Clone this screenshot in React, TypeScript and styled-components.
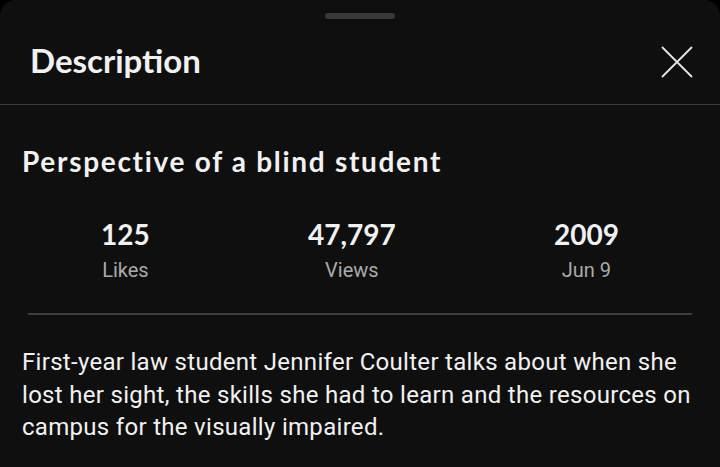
import styled, { createGlobalStyle } from "styled-components";

const GlobalStyle = createGlobalStyle`
  html, body {
    margin: 0;
    padding: 0;
    background: #000;
  }
  body {
    font-family: Roboto, "Liberation Sans", sans-serif;
  }
`;

const Sheet = styled.div`
  width: 720px;
  height: 467px;
  background: #0f0f0f;
  border-radius: 16px 16px 0 0;
  overflow: hidden;
  display: flex;
  flex-direction: column;
`;

const Handle = styled.div`
  width: 70px;
  height: 6px;
  border-radius: 3px;
  background: #393939;
  margin: 13px auto 0;
`;

const Header = styled.div`
  height: 85px;
  display: flex;
  align-items: center;
  justify-content: space-between;
  padding: 0 26px 0 30px;
  border-bottom: 1.5px solid #3a3a3a;
`;

const HeaderTitle = styled.h1`
  margin: 0 0 4px;
  font-family: Lato, "Noto Sans", sans-serif;
  font-weight: 700;
  font-size: 33px;
  color: #f1f1f1;
`;

const CloseButton = styled.button`
  background: none;
  border: none;
  padding: 0;
  width: 34px;
  height: 34px;
  display: flex;
  align-items: center;
  justify-content: center;
  cursor: pointer;
`;

const Body = styled.div`
  padding: 0 22px;
`;

const VideoTitle = styled.h2`
  margin: 40px 0 0;
  font-family: Lato, "Noto Sans", sans-serif;
  font-weight: 700;
  font-size: 28px;
  letter-spacing: 1.7px;
  line-height: 32px;
  color: #f1f1f1;
`;

const Stats = styled.div`
  display: flex;
  justify-content: space-around;
  margin-top: 41px;
`;

const Stat = styled.div`
  display: flex;
  flex-direction: column;
  align-items: center;
`;

const StatValue = styled.div`
  font-family: Lato, "Noto Sans", sans-serif;
  font-weight: 700;
  font-size: 28px;
  line-height: 32px;
  color: #f1f1f1;
`;

const StatLabel = styled.div`
  font-size: 20px;
  line-height: 26px;
  margin-top: 7px;
  color: #aaaaaa;
`;

const Divider = styled.hr`
  margin: 30px 6px 0;
  border: none;
  height: 2px;
  background: #3d3d3d;
`;

const Text = styled.p`
  margin: 31px 0 0;
  font-size: 24px;
  letter-spacing: 0.3px;
  line-height: 32.5px;
  color: #f1f1f1;
`;

const stats = [
  { value: "125", label: "Likes" },
  { value: "47,797", label: "Views" },
  { value: "2009", label: "Jun 9" },
];

export default function App() {
  return (
    <>
      <GlobalStyle />
      <Sheet>
        <Handle />
        <Header>
          <HeaderTitle>Description</HeaderTitle>
          <CloseButton aria-label="Close">
            <svg width="34" height="34" viewBox="0 0 34 34">
              <path
                d="M2 2 L32 32 M32 2 L2 32"
                stroke="#e6e6e6"
                strokeWidth="1.8"
                fill="none"
              />
            </svg>
          </CloseButton>
        </Header>
        <Body>
          <VideoTitle>Perspective of a blind student</VideoTitle>
          <Stats>
            {stats.map((s) => (
              <Stat key={s.label}>
                <StatValue>{s.value}</StatValue>
                <StatLabel>{s.label}</StatLabel>
              </Stat>
            ))}
          </Stats>
          <Divider />
          <Text>
            First-year law student Jennifer Coulter talks about when she lost
            her sight, the skills she had to learn and the resources on campus
            for the visually impaired.
          </Text>
        </Body>
      </Sheet>
    </>
  );
}
